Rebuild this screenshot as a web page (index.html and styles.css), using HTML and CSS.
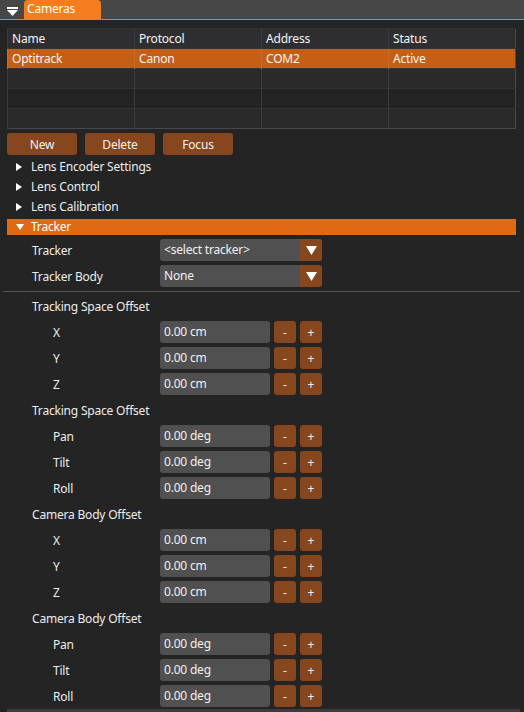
FILE: index.html
```html
<!DOCTYPE html>
<html>
<head>
<meta charset="utf-8">
<link rel="stylesheet" href="styles.css">
</head>
<body>
<div class="titlebar">
  <span class="collapse">
    <svg width="11" height="9" viewBox="0 0 11 9"><rect x="0" y="0" width="11" height="2" fill="#fff"/><polygon points="0,3 11,3 5.5,9" fill="#fff"/></svg>
  </span>
  <div class="tab">Cameras</div>
</div>
<div class="main">
  <table class="cams">
    <thead>
      <tr><th>Name</th><th>Protocol</th><th>Address</th><th>Status</th></tr>
    </thead>
    <tbody>
      <tr class="sel"><td>Optitrack</td><td>Canon</td><td>COM2</td><td>Active</td></tr>
      <tr class="odd"><td></td><td></td><td></td><td></td></tr>
      <tr class="even"><td></td><td></td><td></td><td></td></tr>
      <tr class="odd"><td></td><td></td><td></td><td></td></tr>
    </tbody>
  </table>
  <div class="actions">
    <button class="btn">New</button>
    <button class="btn">Delete</button>
    <button class="btn">Focus</button>
  </div>
  <div class="tree">
    <div class="node"><span class="arr"><svg width="6" height="8" viewBox="0 0 6 8"><polygon points="0,0 6,4 0,8" fill="#fff"/></svg></span>Lens Encoder Settings</div>
    <div class="node"><span class="arr"><svg width="6" height="8" viewBox="0 0 6 8"><polygon points="0,0 6,4 0,8" fill="#fff"/></svg></span>Lens Control</div>
    <div class="node"><span class="arr"><svg width="6" height="8" viewBox="0 0 6 8"><polygon points="0,0 6,4 0,8" fill="#fff"/></svg></span>Lens Calibration</div>
    <div class="node open"><span class="arr"><svg width="8" height="6" viewBox="0 0 8 6"><polygon points="0,0 8,0 4,6" fill="#fff"/></svg></span>Tracker</div>
  </div>
  <div class="form">
    <div class="row">
      <span class="label">Tracker</span>
      <div class="combo"><span class="combo-text">&lt;select tracker&gt;</span><span class="combo-btn"><svg width="11" height="9" viewBox="0 0 11 9"><polygon points="0,0 11,0 5.5,9" fill="#fff"/></svg></span></div>
    </div>
    <div class="row">
      <span class="label">Tracker Body</span>
      <div class="combo"><span class="combo-text">None</span><span class="combo-btn"><svg width="11" height="9" viewBox="0 0 11 9"><polygon points="0,0 11,0 5.5,9" fill="#fff"/></svg></span></div>
    </div>
  </div>
  <div class="sep"></div>
  <div class="form offsets">
    <div class="row"><span class="label">Tracking Space Offset</span></div>
    <div class="row sub"><span class="label">X</span><div class="input">0.00 cm</div><button class="step">-</button><button class="step">+</button></div>
    <div class="row sub"><span class="label">Y</span><div class="input">0.00 cm</div><button class="step">-</button><button class="step">+</button></div>
    <div class="row sub"><span class="label">Z</span><div class="input">0.00 cm</div><button class="step">-</button><button class="step">+</button></div>
    <div class="row"><span class="label">Tracking Space Offset</span></div>
    <div class="row sub"><span class="label">Pan</span><div class="input">0.00 deg</div><button class="step">-</button><button class="step">+</button></div>
    <div class="row sub"><span class="label">Tilt</span><div class="input">0.00 deg</div><button class="step">-</button><button class="step">+</button></div>
    <div class="row sub"><span class="label">Roll</span><div class="input">0.00 deg</div><button class="step">-</button><button class="step">+</button></div>
    <div class="row"><span class="label">Camera Body Offset</span></div>
    <div class="row sub"><span class="label">X</span><div class="input">0.00 cm</div><button class="step">-</button><button class="step">+</button></div>
    <div class="row sub"><span class="label">Y</span><div class="input">0.00 cm</div><button class="step">-</button><button class="step">+</button></div>
    <div class="row sub"><span class="label">Z</span><div class="input">0.00 cm</div><button class="step">-</button><button class="step">+</button></div>
    <div class="row"><span class="label">Camera Body Offset</span></div>
    <div class="row sub"><span class="label">Pan</span><div class="input">0.00 deg</div><button class="step">-</button><button class="step">+</button></div>
    <div class="row sub"><span class="label">Tilt</span><div class="input">0.00 deg</div><button class="step">-</button><button class="step">+</button></div>
    <div class="row sub"><span class="label">Roll</span><div class="input">0.00 deg</div><button class="step">-</button><button class="step">+</button></div>
  </div>
  <div class="bottombar"></div>
</div>
</body>
</html>
```
FILE: styles.css
```css
* { box-sizing: border-box; }
html, body {
  margin: 0;
  padding: 0;
  background: #242424;
  width: 524px;
  height: 712px;
  overflow: hidden;
}
body {
  font-family: "Noto Sans", "Open Sans", sans-serif;
  font-size: 12px;
  letter-spacing: -0.2px;
  color: #ececec;
}
.titlebar {
  height: 20px;
  background: #474747;
  border-bottom: 1px solid #f07a1c;
  display: flex;
  align-items: flex-end;
}
.collapse {
  width: 24px;
  height: 19px;
  display: flex;
  align-items: center;
  padding-left: 7px;
  padding-top: 3px;
}
.collapse svg { display: block; }
.tab {
  width: 77px;
  height: 19px;
  background: #f47d1e;
  border-radius: 4px 4px 0 0;
  color: #fff;
  padding-left: 3px;
  line-height: 17px;
  font-size: 12px;
}
.main {
  padding: 8px 8px 0 7px;
}
.cams {
  width: 509px;
  border-collapse: collapse;
  table-layout: fixed;
  border: 1px solid #48484c;
}
.cams th, .cams td {
  height: 20px;
  padding: 0 0 0 4px;
  text-align: left;
  font-weight: normal;
  border-left: 1px solid #3a3a3c;
  border-top: 1px solid #333335;
  color: #f4f4f4;
  white-space: nowrap;
}
.cams th { background: #2e2e31; }
.cams tr.sel td { background: #c65f16; border-left-color: #c96a28; }
.cams tr.odd td { background: #2a2a2a; }
.cams tr.even td { background: #232323; }
.actions {
  display: flex;
  gap: 8px;
  margin-top: 4px;
}
.btn {
  width: 70px;
  height: 22px;
  border: none;
  border-radius: 3px;
  background: #86461e;
  color: #f2f2f2;
  font-family: inherit;
  font-size: 12px;
  letter-spacing: inherit;
  padding: 0;
}
.tree {
  margin-top: 4px;
  display: flex;
  flex-direction: column;
  gap: 4px;
}
.node {
  height: 16px;
  display: flex;
  align-items: center;
  line-height: 16px;
}
.arr {
  width: 24px;
  padding-left: 9px;
  display: flex;
  align-items: center;
}
.arr svg { display: block; }
.node.open {
  background: #e06a14;
  color: #fff;
}
.form {
  display: flex;
  flex-direction: column;
  gap: 4px;
  margin-top: 4px;
}
.form.offsets { margin-top: 3px; }
.row {
  height: 22px;
  display: flex;
  align-items: center;
  gap: 4px;
  padding-left: 25px;
}
.row .label {
  width: 124px;
  white-space: nowrap;
}
.row.sub { padding-left: 46px; }
.row.sub .label { width: 103px; }
.combo {
  width: 162px;
  height: 22px;
  display: flex;
  background: #505050;
  border-radius: 3px;
  overflow: hidden;
}
.combo-text {
  flex: 1;
  padding-left: 4px;
  line-height: 22px;
  color: #f0f0f0;
}
.combo-btn {
  width: 22px;
  height: 22px;
  background: #86461e;
  display: flex;
  align-items: center;
  justify-content: center;
}
.combo-btn svg { display: block; }
.sep {
  height: 1px;
  background: #555;
  margin: 4px -4px 0 -4px;
}
.input {
  width: 110px;
  height: 22px;
  background: #505050;
  border-radius: 3px;
  padding-left: 4px;
  line-height: 22px;
  color: #f0f0f0;
}
.step {
  width: 22px;
  height: 22px;
  border: none;
  border-radius: 3px;
  background: #86461e;
  color: #f0f0f0;
  font-family: inherit;
  font-size: 12px;
  padding: 0;
}
.bottombar {
  height: 4px;
  background: #3c3c3c;
  margin: 2px -4px 0 0;
}
```
